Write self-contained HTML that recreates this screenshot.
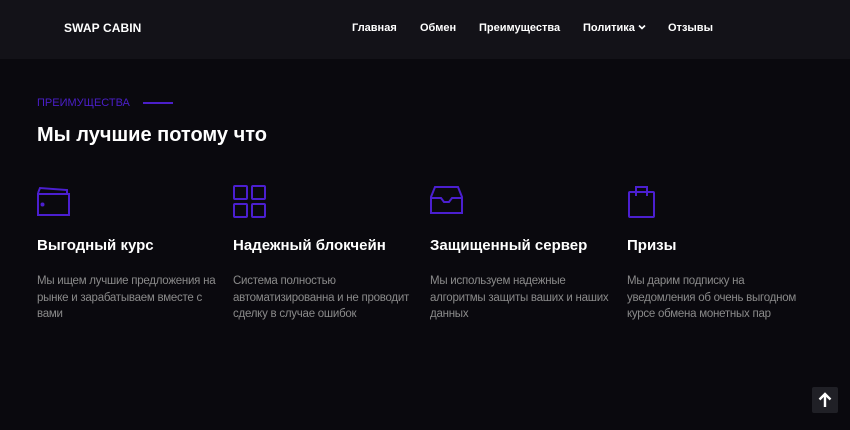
<!DOCTYPE html>
<html><head><meta charset="utf-8"><style>
*{margin:0;padding:0;box-sizing:border-box}
body{width:850px;height:430px;background:#0a090e;font-family:"Liberation Sans",sans-serif;overflow:hidden;position:relative}
.hdr{height:59px;background:#131218;position:relative}
.logo{position:absolute;left:64px;top:21px;color:#fff;font-weight:bold;font-size:12px;letter-spacing:.1px}
.nav{position:absolute;top:22px;font-size:11px;font-weight:bold;color:#fff}
.tag{position:absolute;left:37px;top:97px;color:#4b1fc9;font-size:11px}
.line{position:absolute;left:143px;top:102px;width:30px;height:2px;background:#4b1fc9}
h1{position:absolute;left:37px;top:124px;color:#fff;font-size:20px;font-weight:bold}
.col{position:absolute;top:185px;width:185px}
.col svg{display:block}
.col h3{position:absolute;top:52px;color:#fff;font-size:15px;font-weight:bold;white-space:nowrap}
.col p{position:absolute;top:88px;color:#8a8a8a;font-size:11.5px;line-height:16.5px;width:182px;letter-spacing:-0.25px}
.up{position:absolute;left:812px;top:387px;width:26px;height:26px;background:#202026;border-radius:2px}
</style></head><body>
<div class="hdr">
<div class="logo">SWAP CABIN</div>
<div class="nav" style="left:352px">Главная</div>
<div class="nav" style="left:420px">Обмен</div>
<div class="nav" style="left:479px">Преимущества</div>
<div class="nav" style="left:583px">Политика <svg width="8" height="6" viewBox="0 0 8 6" style="vertical-align:1px"><path d="M1 1.5L4 4.5L7 1.5" stroke="#fff" stroke-width="1.6" fill="none"/></svg></div>
<div class="nav" style="left:668px">Отзывы</div>
</div>
<div class="tag">ПРЕИМУЩЕСТВА</div><div class="line"></div>
<h1>Мы лучшие потому что</h1>

<div class="col" style="left:37px">
<svg width="34" height="34" viewBox="0 0 34 34" fill="none" stroke="#4b1fd0" stroke-width="2"><path d="M1 8V30H32V9H2"/><path d="M1 8L3 3L30 5V9"/><circle cx="5.5" cy="19.5" r="1" fill="#4b1fd0"/></svg>
<h3>Выгодный курс</h3>
<p>Мы ищем лучшие предложения на рынке и зарабатываем вместе с вами</p></div>

<div class="col" style="left:233px">
<svg width="34" height="34" viewBox="0 0 34 34" fill="none" stroke="#4b1fd0" stroke-width="2"><rect x="1" y="1" width="13" height="13" rx="1"/><rect x="19" y="1" width="13" height="13" rx="1"/><rect x="1" y="19" width="13" height="13" rx="1"/><rect x="19" y="19" width="13" height="13" rx="1"/></svg>
<h3>Надежный блокчейн</h3>
<p>Система полностью<br>автоматизированна и не проводит сделку в случае ошибок</p></div>

<div class="col" style="left:430px">
<svg width="34" height="34" viewBox="0 0 34 34" fill="none" stroke="#4b1fd0" stroke-width="2"><path d="M1 12V28H32V12L28 2H5Z"/><path d="M1 13H11L14 17H19L22 13H32"/></svg>
<h3>Защищенный сервер</h3>
<p>Мы используем надежные алгоритмы защиты ваших и наших данных</p></div>

<div class="col" style="left:627px">
<svg width="34" height="34" viewBox="0 0 34 34" fill="none" stroke="#4b1fd0" stroke-width="2"><rect x="2" y="7" width="25" height="25" rx="1"/><path d="M9 11V2H20V11"/></svg>
<h3>Призы</h3>
<p>Мы дарим подписку на<br>уведомления об очень выгодном курсе обмена монетных пар</p></div>

<div class="up"><svg width="26" height="26" viewBox="0 0 26 26" fill="none" stroke="#fff" stroke-width="2.4"><path d="M13 20V7M7.5 12.5L13 7L18.5 12.5"/></svg></div>
</body></html>
